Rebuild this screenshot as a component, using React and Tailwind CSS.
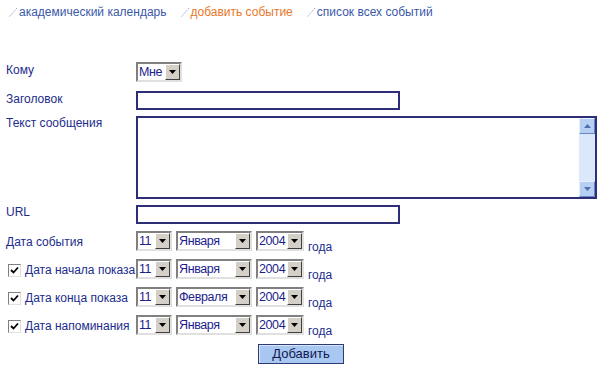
import React from "react";

function Slash() {
  return (
    <svg width="9" height="10" viewBox="0 0 9 10" className="inline-block mr-[1px]">
      <line x1="0.5" y1="9.5" x2="8.5" y2="0.5" stroke="#9aa6c6" strokeWidth="1" strokeDasharray="1.5 1" />
    </svg>
  );
}

function Arrow() {
  return (
    <svg width="7" height="4" viewBox="0 0 7 4">
      <path d="M0 0 H7 L3.5 4 Z" fill="#000" />
    </svg>
  );
}

function Select({ value, w }) {
  return (
    <div
      className="flex items-center h-[20px] bg-white border-2 border-t-[#808080] border-l-[#808080] border-b-[#e0e0e0] border-r-[#e0e0e0] shrink-0"
      style={{ width: w }}
    >
      <span className="flex-1 min-w-0 pl-[1px] text-[12.5px] leading-[16px] tracking-[-0.4px] text-[#1c1c8c] whitespace-nowrap">{value}</span>
      <div className="w-[15px] h-[16px] shrink-0 bg-[#d4d0c8] border border-t-white border-l-white border-b-[#404040] border-r-[#404040] flex items-center justify-center">
        <Arrow />
      </div>
    </div>
  );
}

function DateRow({ day, month, year }) {
  return (
    <div className="flex items-end gap-[4px]">
      <Select value={day} w={36} />
      <Select value={month} w={76} />
      <Select value={year} w={48} />
      <span className="text-[12px] leading-[12px] text-[#1c2c8c] mb-[-2px]">года</span>
    </div>
  );
}

function Check() {
  return (
    <div className="w-[13px] h-[13px] shrink-0 bg-white border border-t-[#808080] border-l-[#808080] border-b-[#e0e0e0] border-r-[#e0e0e0] flex items-center justify-center mr-[4px]">
      <svg width="9" height="9" viewBox="0 0 9 9">
        <path d="M1 4 L3.5 6.5 L8 1.5" stroke="#000" strokeWidth="1.8" fill="none" />
      </svg>
    </div>
  );
}

export default function App() {
  return (
    <div className="w-[600px] h-[366px] bg-white relative overflow-hidden" style={{ fontFamily: "'Liberation Sans', Arial, sans-serif" }}>
      <div className="flex items-center pl-[9px] pt-[5px] text-[12px] leading-[14px]">
        <Slash />
        <span className="text-[#3a58a8]">академический календарь</span>
        <span className="w-[14px]" />
        <Slash />
        <span className="text-[#e8782a]">добавить событие</span>
        <span className="w-[14px]" />
        <Slash />
        <span className="text-[#3a58a8]">список всех событий</span>
      </div>

      <div className="flex flex-col mt-[43px] text-[12px] text-[#1c2c8c]">
        <div className="flex items-center h-[20px]">
          <span className="w-[136px] pl-[6px] -mt-[4px]">Кому</span>
          <Select value="Мне" w={46} />
        </div>
        <div className="flex items-center h-[19px] mt-[9px]">
          <span className="w-[136px] pl-[6px] -mt-[3px]">Заголовок</span>
          <div className="w-[264px] h-[19px] border-2 border-[#2e2e78] bg-white" />
        </div>
        <div className="flex items-start mt-[6px]">
          <span className="w-[136px] pl-[6px] leading-[14px]">Текст сообщения</span>
          <div className="w-[461px] h-[83px] border-2 border-[#2e2e78] bg-white flex justify-end">
            <div className="w-[16px] h-full bg-[#dbe8fb] flex flex-col justify-between">
              <div className="h-[16px] bg-[#b6d0f4] border border-t-[#e8f0fc] border-l-[#e8f0fc] border-b-[#6a86c0] border-r-[#6a86c0] flex items-center justify-center">
                <svg width="7" height="4" viewBox="0 0 7 4"><path d="M0 4 H7 L3.5 0 Z" fill="#4d6fb0" /></svg>
              </div>
              <div className="h-[16px] bg-[#b6d0f4] border border-t-[#e8f0fc] border-l-[#e8f0fc] border-b-[#6a86c0] border-r-[#6a86c0] flex items-center justify-center">
                <svg width="7" height="4" viewBox="0 0 7 4"><path d="M0 0 H7 L3.5 4 Z" fill="#4d6fb0" /></svg>
              </div>
            </div>
          </div>
        </div>
        <div className="flex items-center h-[19px] mt-[6px]">
          <span className="w-[136px] pl-[6px] -mt-[6px]">URL</span>
          <div className="w-[264px] h-[19px] border-2 border-[#2e2e78] bg-white" />
        </div>
        <div className="flex items-center mt-[7px]">
          <span className="w-[136px] shrink-0 pl-[6px] mt-[2px] whitespace-nowrap">Дата события</span>
          <DateRow day="11" month="Января" year="2004" />
        </div>
        <div className="flex items-center mt-[8px]">
          <span className="w-[136px] shrink-0 pl-[8px] flex items-center mt-[2px] whitespace-nowrap"><Check />Дата начала показа</span>
          <DateRow day="11" month="Января" year="2004" />
        </div>
        <div className="flex items-center mt-[8px]">
          <span className="w-[136px] shrink-0 pl-[8px] flex items-center mt-[2px] whitespace-nowrap"><Check />Дата конца показа</span>
          <DateRow day="11" month="Февраля" year="2004" />
        </div>
        <div className="flex items-center mt-[8px]">
          <span className="w-[136px] shrink-0 pl-[8px] flex items-center mt-[2px] whitespace-nowrap"><Check />Дата напоминания</span>
          <DateRow day="11" month="Января" year="2004" />
        </div>
        <div className="flex mt-[9px] pl-[258px]">
          <div className="w-[86px] h-[20px] bg-[#a8c8f2] border border-[#2e3a78] flex items-center justify-center text-[13px] text-[#101850]" style={{ boxShadow: "inset 1px 1px 0 #d8e6fa" }}>
            Добавить
          </div>
        </div>
      </div>
    </div>
  );
}
